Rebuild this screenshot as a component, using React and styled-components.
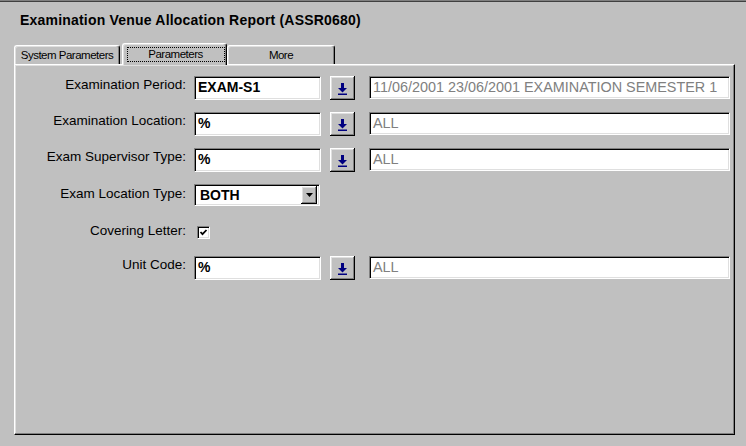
import React from "react";
import styled, { createGlobalStyle, css } from "styled-components";

const GlobalStyle = createGlobalStyle`
  html, body {
    margin: 0;
    padding: 0;
    width: 746px;
    height: 446px;
    overflow: hidden;
    background: #c0c0c0;
  }
  body {
    font-family: "Liberation Sans", Arial, sans-serif;
    color: #000;
  }
`;

const sunken = css`
  box-sizing: border-box;
  background: #fff;
  border: 1px solid;
  border-color: #808080 #ffffff #ffffff #808080;
  box-shadow: inset 1px 1px 0 #000, inset -1px -1px 0 #dfdfdf;
`;

const raised = css`
  box-sizing: border-box;
  background: #c0c0c0;
  box-shadow: inset -1px -1px 0 #000, inset 1px 1px 0 #fff,
    inset -2px -2px 0 #808080, inset 2px 2px 0 #dfdfdf;
`;

const Window = styled.div`
  box-sizing: border-box;
  width: 746px;
  height: 446px;
  background: #c0c0c0;
  border-top: 1px solid #808080;
  box-shadow: inset 0 1px 0 #404040;
  padding: 11px 11px 11px 14px;
  display: flex;
  flex-direction: column;
`;

const Title = styled.h1`
  margin: 0 0 15px 6px;
  font-size: 14px;
  line-height: 16px;
  font-weight: bold;
  letter-spacing: 0.2px;
`;

const TabStrip = styled.div`
  position: relative;
  z-index: 1;
  display: flex;
  align-items: flex-start;
  height: 22px;
`;

const Tab = styled.div`
  box-sizing: border-box;
  width: ${(p) => p.$width}px;
  height: ${(p) => (p.$active ? 22 : 19)}px;
  margin-top: ${(p) => (p.$active ? 0 : 2)}px;
  margin-left: ${(p) => (p.$active ? 2 : 0)}px;
  background: #c0c0c0;
  border-top: 1px solid #fff;
  border-left: 1px solid #fff;
  border-right: 1px solid #000;
  border-radius: 3px 3px 0 0;
  box-shadow: inset -1px 0 0 #808080, inset 1px 1px 0 #dfdfdf;
  padding-top: ${(p) => (p.$active ? 3 : 2)}px;
  display: flex;
  justify-content: center;
  font-size: 11.5px;
  line-height: 14px;
  letter-spacing: -0.5px;
`;

const FocusRing = styled.span`
  box-sizing: border-box;
  width: 98px;
  height: 15px;
  margin-left: 2px;
  border: 1px dotted #000;
  display: flex;
  justify-content: center;
  line-height: 13px;
`;

const Panel = styled.div`
  box-sizing: border-box;
  flex: 1;
  margin-top: -1px;
  background: #c0c0c0;
  border-top: 1px solid #fff;
  border-left: 1px solid #fff;
  border-right: 1px solid #000;
  border-bottom: 1px solid #000;
  box-shadow: inset -1px -1px 0 #808080, inset 1px 1px 0 #dfdfdf;
  padding: 11px 0 0 1px;
  display: flex;
  flex-direction: column;
`;

const Row = styled.div`
  display: flex;
  align-items: flex-start;
  height: ${(p) => p.$h}px;
  margin-top: ${(p) => p.$mt}px;
`;

const Label = styled.label`
  width: 170px;
  margin-right: 8px;
  text-align: right;
  font-size: 13.5px;
  line-height: 16px;
  padding-top: ${(p) => p.$pt ?? 1}px;
  white-space: nowrap;
`;

const Field = styled.div`
  ${sunken};
  width: 127px;
  height: 24px;
  padding: 2px 0 0 3px;
  font-size: 14px;
  font-weight: bold;
  line-height: 16px;
  white-space: nowrap;
  overflow: hidden;
`;

const Description = styled(Field)`
  width: 361px;
  height: 23px;
  margin-left: 14px;
  color: #808080;
  font-size: 14.4px;
  font-weight: normal;
`;

const LookupButton = styled.button`
  ${raised};
  width: 25px;
  height: 24px;
  margin-left: 9px;
  border: none;
  padding: 2px 0 0 0;
  display: flex;
  align-items: center;
  justify-content: center;
`;

const Select = styled.div`
  ${sunken};
  width: 126px;
  height: 22px;
  padding: 2px 2px 0 5px;
  display: flex;
  justify-content: space-between;
  align-items: flex-start;
  font-size: 14px;
  font-weight: bold;
  line-height: 17px;
`;

const SelectButton = styled.span`
  ${raised};
  width: 16px;
  height: 18px;
  margin-top: -1px;
  display: flex;
  align-items: center;
  justify-content: center;
`;

const CheckBox = styled.span`
  ${sunken};
  width: 13px;
  height: 13px;
  margin-top: 5px;
  margin-left: 3px;
  display: flex;
  align-items: center;
  justify-content: center;
`;

const ArrowDown = () => (
  <svg width="9" height="12" viewBox="0 0 9 12" aria-hidden="true">
    <rect x="3" y="0" width="3" height="5" fill="#000080" />
    <polygon points="0,5 9,5 4.5,9.5" fill="#000080" />
    <rect x="0" y="10.5" width="9" height="1.5" fill="#000080" />
  </svg>
);

const Caret = () => (
  <svg width="7" height="4" viewBox="0 0 7 4" aria-hidden="true">
    <polygon points="0,0 7,0 3.5,4" fill="#000" />
  </svg>
);

const Tick = () => (
  <svg width="9" height="9" viewBox="0 0 9 9" aria-hidden="true">
    <polyline
      points="1.5,4 3.5,6.2 7.5,2"
      fill="none"
      stroke="#000"
      strokeWidth="1.8"
    />
  </svg>
);

const lookups = [
  { label: "Examination Period:", value: "EXAM-S1", desc: "11/06/2001 23/06/2001 EXAMINATION SEMESTER 1", mt: 0 },
  { label: "Examination Location:", value: "%", desc: "ALL", mt: 12 },
  { label: "Exam Supervisor Type:", value: "%", desc: "ALL", mt: 12 },
];

const LookupRow = ({ label, value, desc, mt }) => (
  <Row $h={24} $mt={mt}>
    <Label>{label}</Label>
    <Field>{value}</Field>
    <LookupButton type="button">
      <ArrowDown />
    </LookupButton>
    <Description>{desc}</Description>
  </Row>
);

export default function App() {
  return (
    <>
      <GlobalStyle />
      <Window>
        <Title>Examination Venue Allocation Report (ASSR0680)</Title>
        <TabStrip>
          <Tab $width={106}>System Parameters</Tab>
          <Tab $width={105} $active>
            <FocusRing>Parameters</FocusRing>
          </Tab>
          <Tab $width={108}>More</Tab>
        </TabStrip>
        <Panel>
          {lookups.map((l) => (
            <LookupRow key={l.label} {...l} />
          ))}
          <Row $h={22} $mt={12}>
            <Label $pt={2}>Exam Location Type:</Label>
            <Select>
              <span>BOTH</span>
              <SelectButton>
                <Caret />
              </SelectButton>
            </Select>
          </Row>
          <Row $h={18} $mt={15}>
            <Label $pt={2}>Covering Letter:</Label>
            <CheckBox>
              <Tick />
            </CheckBox>
          </Row>
          <LookupRow label="Unit Code:" value="%" desc="ALL" mt={17} />
        </Panel>
      </Window>
    </>
  );
}
